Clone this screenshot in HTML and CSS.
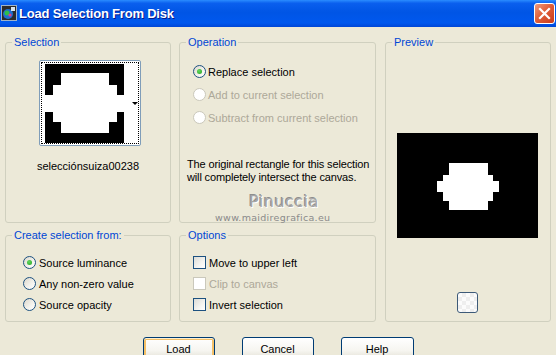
FILE: index.html
```html
<!DOCTYPE html>
<html lang="en">
<head>
    <meta charset="UTF-8">
    <title>Load Selection From Disk</title>
    <link rel="stylesheet" href="styles.css">
</head>
<body>
    <div class="window">
        <div class="titlebar">
            <svg class="title-icon" width="16" height="16" viewBox="0 0 16 16">
                <rect x="0.5" y="0.5" width="15" height="15" fill="#2b2b2b" stroke="#9fb3c8"/>
                <circle cx="7" cy="9" r="5" fill="#1d6fd1"/>
                <circle cx="6" cy="8" r="2.5" fill="#2fbf4a"/>
                <circle cx="9" cy="10" r="1.6" fill="#e23d8c"/>
                <rect x="10" y="2" width="4" height="4" fill="#d8e4f0"/>
            </svg>
            <span class="title">Load Selection From Disk</span>
            <div class="close-btn">
                <svg width="13" height="13" viewBox="0 0 13 13">
                    <path d="M2 2 L11 11 M11 2 L2 11" stroke="#fff" stroke-width="2.2" stroke-linecap="square"/>
                </svg>
            </div>
        </div>

        <div class="client">
            <div class="groups">
                <!-- Selection thumbnail -->
                <fieldset class="group group-selection">
                    <legend>Selection</legend>
                    <div class="thumb">
                        <div class="thumb-focus">
                            <svg width="79" height="79" viewBox="0 0 79 79">
                                <rect width="79" height="79" fill="#000"/>
                                <polygon fill="#fff" points="16,9 64,9 64,21 72,21 72,31 79,31 79,48 72,48 72,58 64,58 64,69 16,69 16,58 8,58 8,48 0,48 0,31 8,31 8,21 16,21"/>
                            </svg>
                            <span class="drop-arrow"></span>
                        </div>
                    </div>
                    <div class="thumb-name">selecciónsuiza00238</div>
                </fieldset>

                <!-- Operation -->
                <fieldset class="group group-operation">
                    <legend>Operation</legend>
                    <div class="group-body">
                        <div class="option-list">
                            <div class="option-row"><span class="radio checked"></span><span>Replace selection</span></div>
                            <div class="option-row disabled"><span class="radio"></span><span>Add to current selection</span></div>
                            <div class="option-row disabled"><span class="radio"></span><span>Subtract from current selection</span></div>
                        </div>
                        <p class="note">The original rectangle for this selection<br>will completely intersect the canvas.</p>
                        <div class="mark-name">Pinuccia</div>
                        <div class="mark-url">www.maidiregrafica.eu</div>
                    </div>
                </fieldset>

                <!-- Preview -->
                <fieldset class="group group-preview">
                    <legend>Preview</legend>
                    <svg class="preview-img" width="141" height="105" viewBox="0 0 141 105">
                        <rect width="141" height="105" fill="#000"/>
                        <polygon fill="#fff" points="52,30 91,30 91,42 96,42 96,48 102,48 102,59 96,59 96,68 91,68 91,77 52,77 52,68 46,68 46,59 40,59 40,48 46,48 46,42 52,42"/>
                    </svg>
                    <div class="bg-btn"></div>
                </fieldset>

                <!-- Create selection from -->
                <fieldset class="group group-create">
                    <legend>Create selection from:</legend>
                    <div class="group-body">
                        <div class="option-row short"><span class="radio checked"></span><span>Source luminance</span></div>
                        <div class="option-row short"><span class="radio"></span><span>Any non-zero value</span></div>
                        <div class="option-row short"><span class="radio"></span><span>Source opacity</span></div>
                    </div>
                </fieldset>

                <!-- Options -->
                <fieldset class="group group-options">
                    <legend>Options</legend>
                    <div class="group-body">
                        <div class="option-row short"><span class="check"></span><span>Move to upper left</span></div>
                        <div class="option-row short disabled"><span class="check"></span><span>Clip to canvas</span></div>
                        <div class="option-row short"><span class="check"></span><span>Invert selection</span></div>
                    </div>
                </fieldset>
            </div>

            <div class="buttons">
                <div class="btn default">Load</div>
                <div class="btn">Cancel</div>
                <div class="btn wide">Help</div>
            </div>
        </div>
    </div>
</body>
</html>
```

FILE: styles.css
```css
body {
    margin: 0;
    font-family: "Liberation Sans", Arial, sans-serif;
    font-size: 11px;
    color: #000;
    background-color: #ece9d8;
}

.window {
    width: 556px;
    height: 355px;
    overflow: hidden;
    background-color: #ece9d8;
}

/* Title bar */
.titlebar {
    height: 27px;
    display: flex;
    align-items: center;
    padding-left: 1px;
    background: linear-gradient(#2a8cff 0%, #0a5fee 12%, #0055e5 45%, #0058ee 85%, #0046d6 100%);
}

.title-icon {
    margin-right: 2px;
    margin-top: -2px;
}

.title {
    flex: 1;
    color: #fff;
    font-weight: bold;
    font-size: 13px;
    letter-spacing: -0.2px;
    text-shadow: 1px 1px #0a1a8a;
}

.close-btn {
    width: 19px;
    height: 19px;
    margin-right: 1px;
    display: flex;
    align-items: center;
    justify-content: center;
    border: 1px solid #fff;
    border-radius: 3px;
    background: linear-gradient(135deg, #f09a7c 0%, #e0603a 45%, #c8391b 100%);
}

/* Client area */
.client {
    padding-top: 9px;
}

.groups {
    margin-left: 5px;
    display: grid;
    grid-template-columns: 166px 197px 167px;
    grid-template-rows: 187px 93px;
    column-gap: 8px;
    row-gap: 6px;
}

.group {
    margin: 0;
    padding: 0;
    min-width: 0;
    border: 1px solid #d0d0bf;
    border-radius: 3px;
}

.group legend {
    margin-left: 6px;
    padding: 0 2px;
    line-height: 13px;
    color: #0046d5;
}

.group-selection { grid-column: 1; grid-row: 1; }
.group-operation { grid-column: 2; grid-row: 1; }
.group-preview { grid-column: 3; grid-row: 1 / 3; margin-left: 1px; }
.group-create { grid-column: 1; grid-row: 2; }
.group-options { grid-column: 2; grid-row: 2; }

.group-operation .group-body { padding: 11px 0 0 7px; }
.group-create .group-body { padding: 10px 0 0 17px; }
.group-options .group-body { padding: 10px 0 0 13px; }

/* Selection thumbnail */
.thumb {
    width: 102px;
    height: 86px;
    box-sizing: border-box;
    margin: 11px 0 0 33px;
    padding: 1px;
    border: 1px solid #7f9db9;
    border-radius: 2px;
    background-color: #fff;
}

.thumb-focus {
    height: 100%;
    box-sizing: border-box;
    border: 1px dotted #000;
    padding-left: 3px;
    display: flex;
    align-items: center;
}

.drop-arrow {
    margin-left: 8px;
    border-left: 3px solid transparent;
    border-right: 3px solid transparent;
    border-top: 3px solid #000;
}

.thumb-name {
    margin-top: 14px;
    line-height: 13px;
    text-align: center;
}

/* Radio / checkbox rows */
.option-list {
    margin-left: 6px;
}

.option-row {
    height: 23px;
    display: flex;
    align-items: center;
    gap: 2px;
    white-space: nowrap;
}

.option-row.short {
    height: 21px;
    gap: 3px;
}

.option-row.disabled {
    color: #aca899;
}

.radio {
    position: relative;
    flex: none;
    width: 13px;
    height: 13px;
    box-sizing: border-box;
    border: 1px solid #1c5180;
    border-radius: 50%;
    background: linear-gradient(135deg, #dcd7cb 0%, #f4f3ee 60%, #ffffff 100%);
}

.radio.checked::after {
    content: "";
    position: absolute;
    left: 3px;
    top: 3px;
    width: 5px;
    height: 5px;
    border-radius: 50%;
    background: radial-gradient(circle at 40% 35%, #62d85e, #21a121);
}

.check {
    flex: none;
    width: 13px;
    height: 13px;
    box-sizing: border-box;
    border: 1px solid #1c5180;
    background: linear-gradient(135deg, #dcdcd7 0%, #f4f4f0 60%, #ffffff 100%);
}

.disabled .radio,
.disabled .check {
    border-color: #cac8bb;
    background: #fff;
}

.note {
    margin: 29px 0 0;
    line-height: 13px;
    white-space: nowrap;
    letter-spacing: -0.15px;
}

/* watermark stamped over the dialog */
.mark-name {
    margin: 9px 0 0 62px;
    line-height: 18px;
    font-family: "DejaVu Sans", sans-serif;
    font-size: 16px;
    letter-spacing: 0.5px;
    color: #a6a6a6;
    text-shadow: 1px 1px 0 #fff, -1px -1px 0 #8e8e8e;
}

.mark-url {
    margin: 1px 0 0 28px;
    line-height: 12px;
    font-family: "DejaVu Sans", sans-serif;
    font-size: 9.5px;
    letter-spacing: 0.3px;
    color: #8a8a8a;
}

/* Preview */
.preview-img {
    display: block;
    margin: 84px 0 0 11px;
}

.bg-btn {
    width: 21px;
    height: 21px;
    box-sizing: border-box;
    margin: 54px 0 0 71px;
    border: 1px solid #3d5a78;
    border-radius: 3px;
    background-color: #fbfbfb;
    background-image: conic-gradient(#eeeeee 25%, #fbfbfb 0 50%, #eeeeee 0 75%, #fbfbfb 0);
    background-size: 8px 8px;
}

/* Buttons */
.buttons {
    margin-top: 15px;
    display: flex;
    justify-content: center;
    gap: 27px;
}

.btn {
    width: 72px;
    height: 23px;
    box-sizing: border-box;
    display: flex;
    align-items: center;
    justify-content: center;
    border: 1px solid #003c74;
    border-radius: 3px;
    background: linear-gradient(#ffffff 0%, #f6f5f0 60%, #e3e0d5 100%);
}

.btn.wide {
    width: 73px;
}

.btn.default {
    box-shadow: inset 0 1px #fff0cf, inset 0 0 0 2px #f4c067;
}
```
